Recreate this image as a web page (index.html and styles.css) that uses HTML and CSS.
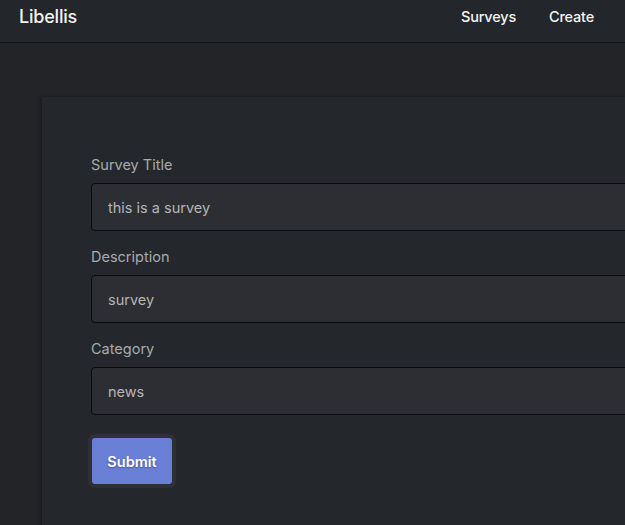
FILE: index.html
```html
<!DOCTYPE html>
<html lang="en">
<head>
<meta charset="utf-8">
<title>Libellis</title>
<link rel="stylesheet" href="styles.css">
</head>
<body>
<header class="topbar">
  <a class="brand" href="#">Libellis</a>
  <nav class="nav">
    <a class="nav-link" href="#">Surveys</a>
    <a class="nav-link" href="#">Create</a>
  </nav>
</header>
<main class="main">
  <section class="card">
    <form class="form">
      <div class="field">
        <label class="label">Survey Title</label>
        <input class="input" type="text" value="this is a survey">
      </div>
      <div class="field">
        <label class="label">Description</label>
        <input class="input" type="text" value="survey">
      </div>
      <div class="field">
        <label class="label">Category</label>
        <input class="input" type="text" value="news">
      </div>
      <button class="btn" type="button">Submit</button>
    </form>
  </section>
</main>
</body>
</html>
```
FILE: styles.css
```css
html, body {
  margin: 0;
  padding: 0;
  background: #222428;
  font-family: Inter, "Liberation Sans", sans-serif;
  overflow: hidden;
  height: 525px;
}
.topbar {
  height: 43px;
  box-sizing: border-box;
  background: #23262b;
  border-bottom: 1px solid #141518;
  display: flex;
  align-items: center;
  justify-content: space-between;
  padding: 0 31px 10px 19px;
}
.brand {
  color: #f2f2f2;
  text-decoration: none;
  font-size: 18px;
  font-weight: 500;
  letter-spacing: -0.2px;
}
.nav {
  display: flex;
  gap: 33px;
}
.nav-link {
  color: #f4f4f4;
  text-decoration: none;
  font-size: 14.5px;
  font-weight: 500;
  letter-spacing: -0.2px;
}
.main {
  padding: 54px 0 0 42px;
  overflow: hidden;
}
.card {
  background: #24272c;
  box-shadow: -2px 0 3px rgba(0,0,0,0.25);
  min-height: 440px;
  padding: 58px 0 0 49px;
  box-sizing: border-box;
}
.form {
  display: flex;
  flex-direction: column;
  align-items: flex-start;
}
.field {
  display: flex;
  flex-direction: column;
  width: calc(100% + 20px);
  margin-bottom: 16px;
}
.label {
  color: #a9aaac;
  font-size: 14.5px;
  line-height: 20px;
  margin-bottom: 8px;
}
.input {
  height: 48px;
  box-sizing: border-box;
  background: #2d2e33;
  border: 1px solid #0b0b0c;
  border-radius: 4px;
  color: #b5b5b7;
  font-family: inherit;
  font-size: 14.5px;
  padding: 0 16px;
  outline: none;
}
.btn {
  margin-top: 7px;
  margin-left: 1px;
  width: 80px;
  height: 46px;
  background: #6a7fd6;
  border: none;
  border-radius: 3px;
  box-shadow: 0 0 0 4px #2e3036;
  color: #fff;
  font-family: inherit;
  font-size: 14.5px;
  font-weight: 600;
  text-shadow: 0 1px 2px rgba(0,0,0,0.35);
}
```
